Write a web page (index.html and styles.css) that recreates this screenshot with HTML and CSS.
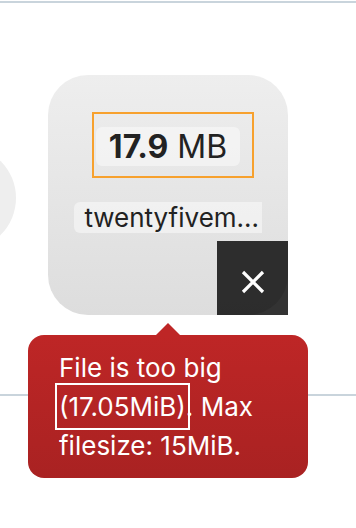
FILE: index.html
```html
<!DOCTYPE html>
<html>
<head>
<meta charset="utf-8">
<link rel="stylesheet" href="styles.css">
</head>
<body>
<div class="topline"></div>
<div class="stage">
  <div class="row">
    <div class="ghost"></div>
    <div class="preview">
      <div class="details">
        <div class="size"><span><strong>17.9</strong> MB</span></div>
        <div class="filename"><span>twentyfivemegabytes.bin</span></div>
      </div>
      <div class="mark-size"></div>
      <div class="remove">
        <svg width="24" height="24" viewBox="0 0 24 24"><path d="M2 2L22 22M22 2L2 22" stroke="#fff" stroke-width="3.2" fill="none"/></svg>
      </div>
      <div class="error">File is too big <span class="hl">(17.05MiB)</span>. Max filesize: 15MiB.</div>
    </div>
  </div>
</div>
</body>
</html>
```
FILE: styles.css
```css
html, body {
  margin: 0;
  padding: 0;
  background: #fff;
}
body {
  font-family: Inter, "Noto Sans", sans-serif;
  color: #222;
  width: 356px;
  height: 528px;
  overflow: hidden;
}
.topline {
  margin-top: 1px;
  height: 2px;
  background: #c9d4dc;
}
.stage {
  height: 525px;
  background: linear-gradient(to bottom, transparent 391px, #c9d4dc 391px, #c9d4dc 393px, transparent 393px);
}
.row {
  display: flex;
  align-items: flex-start;
  padding-top: 72px;
}
.ghost {
  flex: none;
  width: 104px;
  height: 104px;
  margin-left: -88px;
  margin-top: 71px;
  border-radius: 50%;
  background: #eeeeee;
}
.preview {
  flex: none;
  position: relative;
  width: 240px;
  height: 240px;
  margin-left: 32px;
  border-radius: 40px;
  background: linear-gradient(to bottom, #eeeeee, #dddddd);
}
.details {
  padding: 52px 26px;
  font-size: 26px;
  line-height: 39px;
  text-align: center;
  color: #222;
}
.size {
  font-size: 32px;
  margin-bottom: 32px;
}
.size strong {
  font-weight: 700;
}
.size span,
.filename span {
  background: rgba(255, 255, 255, 0.45);
  padding: 0 0.4em;
  border-radius: 6px;
}
.filename {
  white-space: nowrap;
  overflow: hidden;
  text-overflow: ellipsis;
}
.mark-size {
  position: absolute;
  left: 44px;
  top: 37px;
  width: 162px;
  height: 66px;
  box-sizing: border-box;
  border: 2px solid #f7a12e;
}
.remove {
  position: absolute;
  right: 0;
  bottom: 0;
  width: 71px;
  height: 74px;
  background: rgba(0, 0, 0, 0.8);
  display: flex;
  align-items: center;
  justify-content: center;
  padding-top: 7px;
  box-sizing: border-box;
}
.remove svg {
  display: block;
}
.error {
  position: absolute;
  left: -20px;
  top: 260px;
  width: 280px;
  box-sizing: border-box;
  padding: 13px 31px;
  border-radius: 16px;
  background: linear-gradient(to bottom, #be2626, #a92222);
  color: #fff;
  font-size: 26px;
  line-height: 39px;
}
.error::after {
  content: "";
  position: absolute;
  top: -12px;
  left: 128px;
  border-left: 12px solid transparent;
  border-right: 12px solid transparent;
  border-bottom: 12px solid #be2626;
}
.hl {
  display: inline-block;
  outline: 2px solid #fff;
  outline-offset: 2px;
}
```
